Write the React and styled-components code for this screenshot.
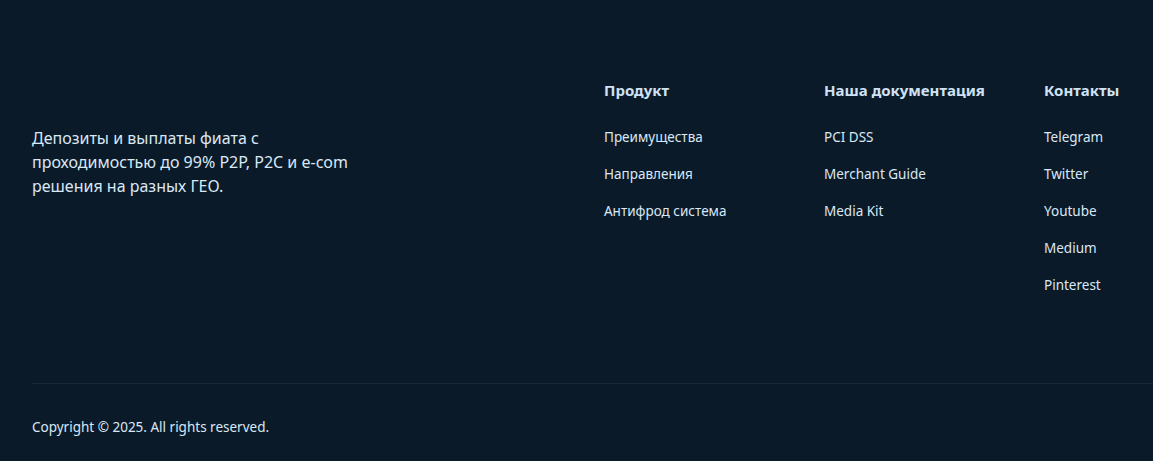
import React from "react";
import styled, { createGlobalStyle } from "styled-components";

const Global = createGlobalStyle`
  html, body { margin: 0; padding: 0; background: #0b1a28; }
  body { font-family: "Noto Sans", "Open Sans", sans-serif; -webkit-font-smoothing: antialiased; }
  * { box-sizing: border-box; }
`;

const Footer = styled.footer`
  background: #0b1a28;
  min-height: 461px;
  padding: 0 0 0 32px;
  overflow: hidden;
`;

const Top = styled.div`
  display: flex;
  align-items: flex-start;
  padding-top: 80px;
  height: 383px;
`;

const AboutCell = styled.div`
  flex: 0 0 572px;
  padding-top: 46px;
`;

const About = styled.p`
  max-width: 324px;
  margin: 0;
  font-size: 16px;
  line-height: 24px;
  color: #d9e8f6;
`;

const NoBreak = styled.span`
  white-space: nowrap;
`;

const Column = styled.div`
  flex: 0 0 220px;
  display: flex;
  flex-direction: column;
`;

const Heading = styled.h4`
  margin: 0 0 28px;
  font-size: 15px;
  line-height: 20px;
  font-weight: 700;
  color: #cfe2f5;
  white-space: nowrap;
`;

const LinkList = styled.ul`
  list-style: none;
  margin: 0;
  padding: 0;
  display: flex;
  flex-direction: column;
  gap: 19px;
`;

const Link = styled.a`
  display: block;
  font-size: 13.5px;
  line-height: 18px;
  color: #d9e8f6;
  text-decoration: none;
  white-space: nowrap;
`;

const Divider = styled.hr`
  margin: 0;
  border: none;
  border-top: 1px solid #15293b;
`;

const Copyright = styled.p`
  margin: 0;
  padding-top: 33px;
  font-size: 13.5px;
  line-height: 20px;
  color: #d9e8f6;
`;

const columns = [
  { title: "Продукт", links: ["Преимущества", "Направления", "Антифрод система"] },
  { title: "Наша документация", links: ["PCI DSS", "Merchant Guide", "Media Kit"] },
  { title: "Контакты", links: ["Telegram", "Twitter", "Youtube", "Medium", "Pinterest"] },
];

export default function App() {
  return (
    <>
      <Global />
      <Footer>
        <Top>
          <AboutCell>
            <About>
              Депозиты и выплаты фиата с проходимостью до 99% P2P, P2C и <NoBreak>e-com</NoBreak> решения на разных ГЕО.
            </About>
          </AboutCell>
          {columns.map((c) => (
            <Column key={c.title}>
              <Heading>{c.title}</Heading>
              <LinkList>
                {c.links.map((l) => (
                  <li key={l}>
                    <Link href="#">{l}</Link>
                  </li>
                ))}
              </LinkList>
            </Column>
          ))}
        </Top>
        <Divider />
        <Copyright>Copyright © 2025. All rights reserved.</Copyright>
      </Footer>
    </>
  );
}
